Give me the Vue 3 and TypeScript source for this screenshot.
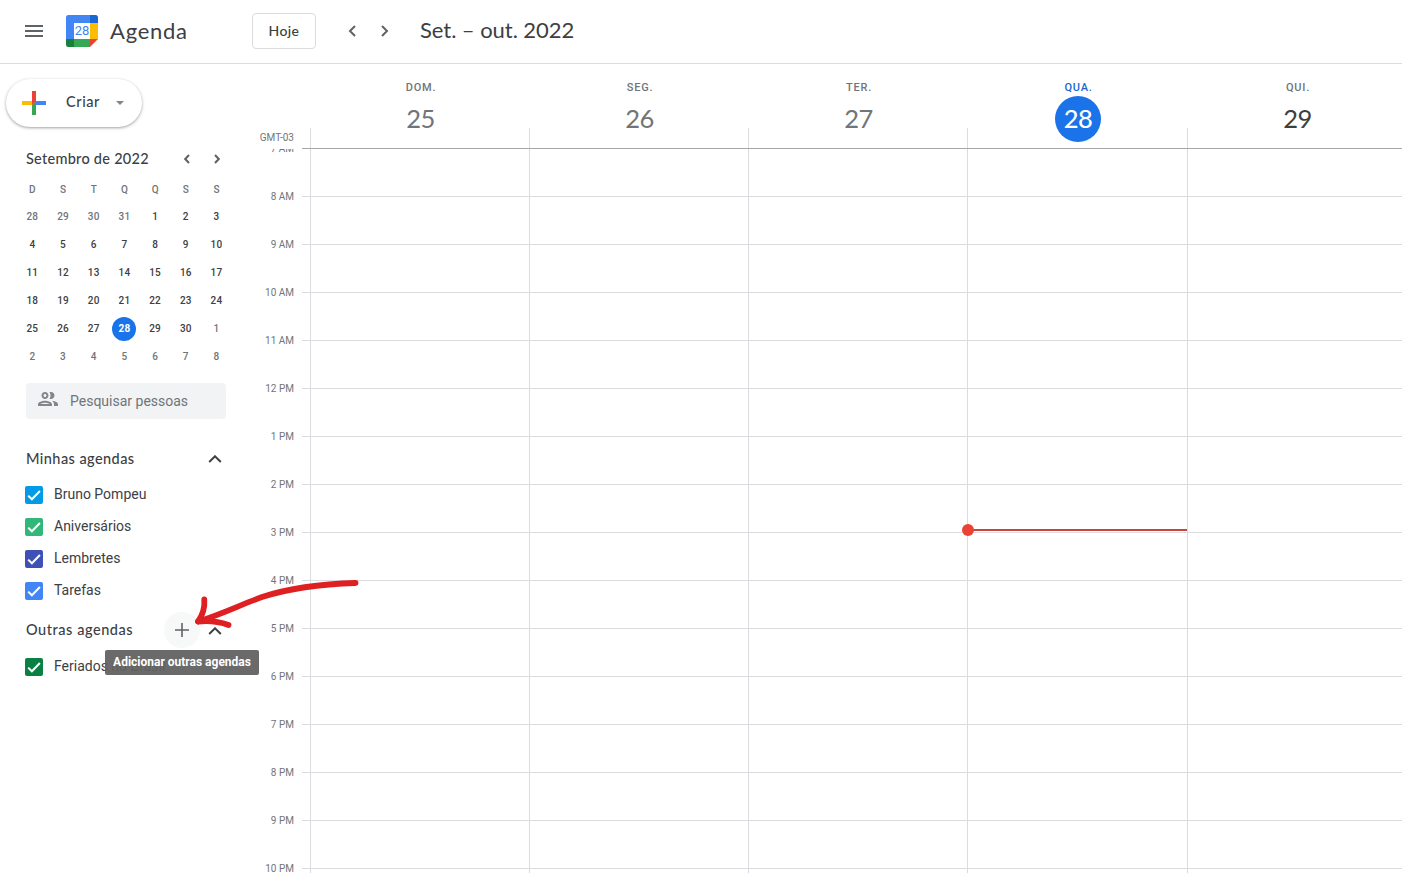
<script setup lang="ts">
interface Day { name: string; num: number; state: 'past' | 'today' | 'future' }
interface Agenda { name: string; tone: string }

const days: Day[] = [
  { name: 'DOM.', num: 25, state: 'past' },
  { name: 'SEG.', num: 26, state: 'past' },
  { name: 'TER.', num: 27, state: 'past' },
  { name: 'QUA.', num: 28, state: 'today' },
  { name: 'QUI.', num: 29, state: 'future' },
]
const hours: string[] = [
  '7 AM', '8 AM', '9 AM', '10 AM', '11 AM', '12 PM', '1 PM', '2 PM', '3 PM',
  '4 PM', '5 PM', '6 PM', '7 PM', '8 PM', '9 PM', '10 PM',
]
const weekLetters: string[] = ['D', 'S', 'T', 'Q', 'Q', 'S', 'S']

// The month view starts on 28 August and spans six weeks.
const monthCells = Array.from({ length: 42 }, (_, i) => {
  const n = i - 3
  if (n < 1) return { n: n + 31, out: true, today: false }
  if (n > 30) return { n: n - 30, out: true, today: false }
  return { n, out: false, today: n === 28 }
})

const mine: Agenda[] = [
  { name: 'Bruno Pompeu', tone: 'sky' },
  { name: 'Aniversários', tone: 'mint' },
  { name: 'Lembretes', tone: 'indigo' },
  { name: 'Tarefas', tone: 'blue' },
]
const others: Agenda[] = [{ name: 'Feriados no Brasil', tone: 'green' }]
</script>

<template>
  <div class="app">
    <header class="topbar">
      <svg class="burger" width="18" height="12" viewBox="0 0 18 12"><path d="M0 0h18v2H0zM0 5h18v2H0zM0 10h18v2H0z" fill="#5f6368" /></svg>
      <div class="logo">
        <svg width="32" height="32" viewBox="0 0 32 32">
          <path d="M2.5 0H24v8H8v16H0V2.5A2.5 2.5 0 0 1 2.5 0z" fill="#4285f4" />
          <path d="M24 0h5.500A2.500 2.500 0 0 1 32 2.500V8h-8z" fill="#1967d2" />
          <path d="M24 8h8v16h-8z" fill="#fbbc04" />
          <path d="M8 24h16v8H8z" fill="#34a853" />
          <path d="M0 24h8v8H2.500A2.500 2.500 0 0 1 0 29.500z" fill="#188038" />
          <path d="M24 24h8l-8 8z" fill="#ea4335" />
          <path d="M8 8h16v16H8z" fill="#fff" />
        </svg>
        <span class="logo-num">28</span>
      </div>
      <span class="brand">Agenda</span>
      <button class="today-btn">Hoje</button>
      <svg class="nav-prev" width="8" height="12" viewBox="0 0 8 12"><path d="M7 1L2 6l5 5" /></svg>
      <svg class="nav-next" width="8" height="12" viewBox="0 0 8 12"><path d="M1 1l5 5-5 5" /></svg>
      <h1 class="period">Set. – out. 2022</h1>
    </header>

    <div class="content">
      <aside class="sidebar">
        <button class="create">
          <svg width="24" height="24" viewBox="0 0 24 24">
            <path d="M10 0h4v10l-4 4z" fill="#ea4335" />
            <path d="M14 10h10v4H14z" fill="#4285f4" />
            <path d="M10 14l4-4v14h-4z" fill="#34a853" />
            <path d="M0 10h10v4H0z" fill="#fbbc04" />
            <path d="M10 10h4l-4 4z" fill="#ea4335" />
          </svg>
          <span class="create-text">Criar</span>
          <svg class="caret" width="8" height="4" viewBox="0 0 8 4"><path d="M0 0h8L4 4z" fill="#80868b" /></svg>
        </button>

        <div class="month-head">
          <span class="month-title">Setembro de 2022</span>
          <svg class="m-prev" width="6" height="10" viewBox="0 0 6 10"><path d="M5 1L1.200 5 5 9" /></svg>
          <svg class="m-next" width="6" height="10" viewBox="0 0 6 10"><path d="M1 1l3.800 4L1 9" /></svg>
        </div>
        <div class="week-letters">
          <span v-for="(l, i) in weekLetters" :key="i">{{ l }}</span>
        </div>
        <div class="month-grid">
          <span v-for="(c, i) in monthCells" :key="i" class="cell" :class="{ out: c.out, today: c.today }"><b>{{ c.n }}</b></span>
        </div>

        <div class="search">
          <svg width="24" height="24" viewBox="0 0 24 24">
            <path d="M9 13.750c-2.340 0-7 1.170-7 3.500V19h14v-1.750c0-2.330-4.660-3.500-7-3.500zM4.340 17c.84-.58 2.870-1.250 4.660-1.250s3.820.67 4.660 1.250H4.340zM9 12c1.930 0 3.500-1.570 3.500-3.500S10.930 5 9 5 5.500 6.570 5.500 8.500 7.070 12 9 12zm0-5c.83 0 1.500.67 1.500 1.500S9.830 10 9 10s-1.500-.67-1.500-1.500S8.170 7 9 7zm7.040 6.810c1.160.84 1.960 1.960 1.960 3.440V19h4v-1.750c0-2.020-3.500-3.170-5.960-3.440zM15 12c1.930 0 3.500-1.570 3.500-3.500S16.930 5 15 5c-.54 0-1.040.13-1.500.35.63.89 1 1.980 1 3.150s-.37 2.260-1 3.150c.46.22.96.35 1.500.35z" fill="#80868b" />
          </svg>
          <span>Pesquisar pessoas</span>
        </div>

        <div class="group-head">
          <span class="group-title mine-title">Minhas agendas</span>
          <svg class="chev" width="14" height="8" viewBox="0 0 14 8"><path d="M1.200 7L7 1.300 12.800 7" /></svg>
        </div>
        <div v-for="a in mine" :key="a.name" class="agenda">
          <span class="box" :class="a.tone"><svg width="18" height="18" viewBox="0 0 18 18"><path d="M3.200 9.600l3.700 3.700 8-8.300" /></svg></span>
          <span>{{ a.name }}</span>
        </div>

        <div class="group-head others-head">
          <span class="group-title others-title">Outras agendas</span>
          <span class="add">
            <svg width="14" height="14" viewBox="0 0 14 14"><path d="M7 0v14M0 7h14" /></svg>
            <span class="tooltip">Adicionar outras agendas</span>
          </span>
          <svg class="chev" width="14" height="8" viewBox="0 0 14 8"><path d="M1.200 7L7 1.300 12.800 7" /></svg>
        </div>
        <div v-for="a in others" :key="a.name" class="agenda">
          <span class="box" :class="a.tone"><svg width="18" height="18" viewBox="0 0 18 18"><path d="M3.200 9.600l3.700 3.700 8-8.300" /></svg></span>
          <span>{{ a.name }}</span>
        </div>
      </aside>

      <main class="week">
        <div class="week-head">
          <div class="zone">GMT-03</div>
          <div v-for="d in days" :key="d.num" class="day-head" :class="d.state">
            <span class="day-name">{{ d.name }}</span>
            <span class="day-num">{{ d.num }}</span>
          </div>
        </div>
        <div class="week-body">
          <div class="times">
            <span v-for="h in hours" :key="h" class="time">{{ h }}</span>
          </div>
          <div class="ticks"><i v-for="h in hours" :key="h" class="slot"></i></div>
          <div v-for="d in days" :key="d.num" class="day-col" :class="d.state">
            <i v-for="h in hours" :key="h" class="slot"></i>
            <div v-if="d.state === 'today'" class="now"></div>
          </div>
        </div>
      </main>
    </div>

    <svg class="arrow" width="180" height="70" viewBox="190 570 180 70">
      <path d="M355.500 583C320 584 290 588 262 597C240 605 220 615 198 621.500" />
      <path d="M204.300 599.500C205 608 202 616 198 621.500C208 620.500 219 621.500 228.500 625" />
    </svg>
  </div>
</template>

<style>
body { margin: 0; overflow: hidden; }
</style>

<style scoped>
.app {
  position: relative;
  width: 1402px;
  height: 873px;
  overflow: hidden;
  background: #fff;
  color: #3c4043;
  font-family: Roboto, sans-serif;
  display: flex;
  flex-direction: column;
}
.app * { box-sizing: border-box; }
svg { display: block; flex: none; }
button { font: inherit; color: inherit; padding: 0; }

.topbar {
  flex: none;
  height: 64px;
  padding-bottom: 2px;
  border-bottom: 1px solid #dadce0;
  display: flex;
  align-items: center;
  font-family: Lato, sans-serif;
}
.burger { margin-left: 25px; }
.logo { position: relative; margin-left: 23px; }
.logo-num {
  position: absolute;
  inset: 0;
  font: 400 13px/32px Roboto, sans-serif;
  color: #4285f4;
  text-align: center;
}
.brand { width: 142px; padding-left: 12px; font-size: 22px; letter-spacing: 0.75px; white-space: nowrap; }
.today-btn {
  width: 64px;
  height: 36px;
  margin-left: 12px;
  border: 1px solid #dadce0;
  border-radius: 4px;
  background: #fff;
  font-size: 14px;
  font-weight: 500;
  letter-spacing: 0.4px;
}
.nav-prev, .nav-next, .m-prev, .m-next, .chev { fill: none; stroke: #5f6368; stroke-width: 2; }
.nav-prev { margin-left: 32px; }
.nav-next { margin-left: 25px; }
.period { margin: -2px 0 0 31px; font-size: 22px; font-weight: 400; letter-spacing: -0.05px; white-space: nowrap; }

.content { flex: 1; min-height: 0; display: flex; }
.sidebar { width: 256px; flex: none; }
.create {
  display: flex;
  align-items: center;
  width: 136px;
  height: 48px;
  margin: 15px 0 0 6px;
  padding-left: 16px;
  border: 0;
  border-radius: 24px;
  background: #fff;
  box-shadow: 0 1px 2px rgba(60, 64, 67, .3), 0 1px 3px 1px rgba(60, 64, 67, .15);
}
.create-text { width: 50px; margin: -3px 0 0 20px; text-align: left; font: 500 14.5px Lato, sans-serif; letter-spacing: 0.6px; }
.caret { margin-top: 0; }

.month-head { display: flex; align-items: center; height: 20px; margin-top: 22px; padding-left: 26px; }
.month-title { width: 158px; margin-top: -2px; font: 500 14.5px Lato, sans-serif; letter-spacing: 0.27px; white-space: nowrap; }
.m-next { margin-left: 24px; }
.week-letters, .month-grid { display: grid; grid-template-columns: repeat(7, 30.7px); margin-left: 17px; text-align: center; }
.week-letters { margin-top: 11px; font-size: 10px; line-height: 20px; font-weight: 500; color: #70757a; }
.month-grid { margin-top: 3px; grid-auto-rows: 28px; }
.cell { display: flex; align-items: center; justify-content: center; font-size: 10px; }
.cell b { width: 24px; height: 24px; border-radius: 50%; line-height: 24px; font-weight: 500; letter-spacing: 0.2px; }
.cell.out b { color: #70757a; }
.cell.today b { background: #1a73e8; color: #fff; font-weight: 700; }

.search {
  display: flex;
  align-items: center;
  width: 200px;
  height: 36px;
  margin: 12px 0 0 26px;
  padding-left: 10px;
  border-radius: 4px;
  background: #f1f3f4;
  color: #70757a;
  font-size: 14px;
}
.search svg { margin: -4px 10px 0 0; }

.group-head { display: flex; align-items: center; height: 36px; margin-top: 22px; padding-left: 26px; }
.group-title { flex: none; margin-top: -2px; font: 500 14.5px Lato, sans-serif; letter-spacing: 0.43px; white-space: nowrap; }
.mine-title { width: 182px; }
.others-title { width: 138px; margin-top: -1px; letter-spacing: 0.55px; }
.chev { stroke: #3c4043; }
.agenda + .others-head { margin-top: 6px; }
.others-head .chev { margin-top: 2px; }
.group-head + .agenda { margin-top: 1px; }
.others-head + .agenda { margin-top: 2px; }
.add {
  position: relative;
  width: 36px;
  height: 36px;
  margin-right: 8px;
  border-radius: 50%;
  background: #f7f8f8;
  display: flex;
  align-items: center;
  justify-content: center;
}
.add svg { stroke: #5f6368; stroke-width: 1.600; }
.tooltip {
  position: absolute;
  z-index: 2;
  left: -59px;
  top: 38px;
  width: 154px;
  height: 25px;
  border-radius: 2px;
  background: rgba(97, 97, 97, .94);
  color: #fff;
  font-size: 12px;
  font-weight: 700;
  line-height: 24px;
  text-align: center;
  white-space: nowrap;
}
.agenda { display: flex; align-items: center; height: 32px; padding-left: 25px; font-size: 14px; }
.box { width: 18px; height: 18px; margin: 2px 11px 0 0; border-radius: 2px; }
.box path { fill: none; stroke: #fff; stroke-width: 2; }
.sky { background: #039be5; }
.mint { background: #33b679; }
.indigo { background: #3f51b5; }
.blue { background: #4285f4; }
.green { background: #0b8043; }

.week { flex: none; width: 1150px; display: flex; flex-direction: column; }
.week-head { position: relative; flex: none; height: 85px; padding-bottom: 1px; display: flex; }
.week-head::after { content: ''; position: absolute; left: 46px; right: 0; bottom: 0; height: 1px; background: #a4a6a8; }
.zone { width: 54px; padding: 67px 16px 0 0; text-align: right; font-size: 10px; line-height: 14px; color: #70757a; white-space: nowrap; }
.day-head { position: relative; width: 219px; padding-left: 2px; display: flex; flex-direction: column; align-items: center; color: #70757a; }
.day-head::before { content: ''; position: absolute; left: 0; bottom: 0; width: 1px; height: 20px; background: #dadce0; }
.day-head.today, .day-col.today { width: 220px; }
.day-name { margin-top: 17px; padding-left: 1px; font-size: 11px; line-height: 14px; font-weight: 500; letter-spacing: 0.8px; }
.day-num { width: 46px; height: 46px; margin-top: 1px; border-radius: 50%; text-align: center; font: 400 25.5px/44px Lato, sans-serif; letter-spacing: -0.6px; }
.today .day-name { color: #1967d2; }
.today .day-num { background: #1a73e8; color: #fff; font-weight: 500; }
.future .day-num { color: #3c4043; }

.week-body { flex: 1; min-height: 0; display: flex; overflow: hidden; }
.times { width: 46px; margin-top: -24px; padding-right: 8px; display: flex; flex-direction: column; }
.time { flex: none; height: 48px; line-height: 48px; text-align: right; font-size: 10px; color: #70757a; }
.ticks { width: 8px; }
.slot { display: block; height: 48px; border-bottom: 1px solid #dadce0; }
.day-col { position: relative; width: 219px; border-left: 1px solid #dadce0; }
.now { position: absolute; left: 0; right: -1px; top: 380px; height: 2px; background: #c5473b; }
.now::before { content: ''; position: absolute; left: -6px; top: -5px; width: 12px; height: 12px; border-radius: 50%; background: #ea4335; }

.arrow { position: absolute; left: 190px; top: 570px; }
.arrow path { fill: none; stroke: #df2023; stroke-width: 5.800; stroke-linecap: round; stroke-linejoin: round; }
</style>
